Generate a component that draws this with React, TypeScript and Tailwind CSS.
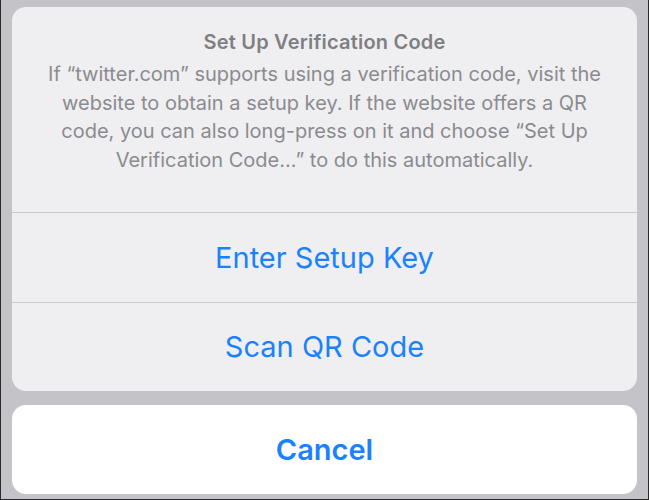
export default function App() {
  const font = { fontFamily: "Inter, 'Noto Sans', sans-serif" };
  return (
    <div
      className="h-[500px] w-[649px] bg-[#c4c4c8] border-x border-b border-[#2a2a2a] px-[11px] pt-[7px] flex flex-col"
      style={font}
    >
      <div className="rounded-[14px] bg-[#efeff1] flex flex-col overflow-hidden">
        <div className="h-[205px] flex flex-col items-center pt-[22px]">
          <div className="text-[20px] leading-[26px] font-semibold text-[#7f7f83] tracking-[0.2px]">
            Set Up Verification Code
          </div>
          <p className="mt-[5px] max-w-[562px] text-center text-[20px] leading-[28.5px] text-[#8b8b8f]">
            If “twitter.com” supports using a verification code, visit the website to obtain a setup key. If the website offers a QR code, you can also long-press on it and choose “Set Up Verification Code...” to do this automatically.
          </p>
        </div>
        <button className="h-[90px] border-t border-[#cacace] text-[29px] text-[#1a82fb]">
          Enter Setup Key
        </button>
        <button className="h-[89px] border-t border-[#cacace] text-[29px] text-[#1a82fb]">
          Scan QR Code
        </button>
      </div>
      <button className="mt-[14px] h-[89px] rounded-[14px] bg-white text-[29px] font-semibold text-[#1a82fb]">
        Cancel
      </button>
    </div>
  );
}
